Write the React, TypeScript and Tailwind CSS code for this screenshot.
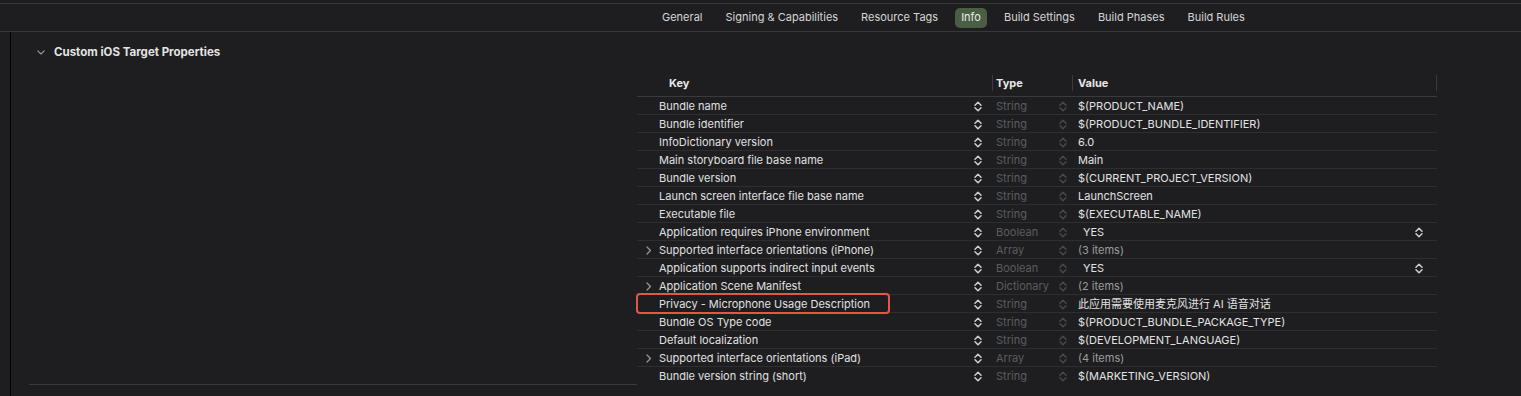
import React from "react";

type Row = {
  key: string;
  type: string;
  value: string;
  expandable?: boolean;
  popup?: boolean;
  dimValue?: boolean;
  highlight?: boolean;
};

const rows: Row[] = [
  { key: "Bundle name", type: "String", value: "$(PRODUCT_NAME)" },
  { key: "Bundle identifier", type: "String", value: "$(PRODUCT_BUNDLE_IDENTIFIER)" },
  { key: "InfoDictionary version", type: "String", value: "6.0" },
  { key: "Main storyboard file base name", type: "String", value: "Main" },
  { key: "Bundle version", type: "String", value: "$(CURRENT_PROJECT_VERSION)" },
  { key: "Launch screen interface file base name", type: "String", value: "LaunchScreen" },
  { key: "Executable file", type: "String", value: "$(EXECUTABLE_NAME)" },
  { key: "Application requires iPhone environment", type: "Boolean", value: "YES", popup: true },
  { key: "Supported interface orientations (iPhone)", type: "Array", value: "(3 items)", expandable: true, dimValue: true },
  { key: "Application supports indirect input events", type: "Boolean", value: "YES", popup: true },
  { key: "Application Scene Manifest", type: "Dictionary", value: "(2 items)", expandable: true, dimValue: true },
  { key: "Privacy - Microphone Usage Description", type: "String", value: "此应用需要使用麦克风进行 AI 语音对话", highlight: true },
  { key: "Bundle OS Type code", type: "String", value: "$(PRODUCT_BUNDLE_PACKAGE_TYPE)" },
  { key: "Default localization", type: "String", value: "$(DEVELOPMENT_LANGUAGE)" },
  { key: "Supported interface orientations (iPad)", type: "Array", value: "(4 items)", expandable: true, dimValue: true },
  { key: "Bundle version string (short)", type: "String", value: "$(MARKETING_VERSION)" },
];

function Stepper({ color }: { color: string }) {
  return (
    <svg width="8" height="11" viewBox="0 0 8 11" fill="none">
      <path d="M1 4.2 L4 1.2 L7 4.2" stroke={color} strokeWidth="1.5" strokeLinecap="round" strokeLinejoin="round" />
      <path d="M1 6.8 L4 9.8 L7 6.8" stroke={color} strokeWidth="1.5" strokeLinecap="round" strokeLinejoin="round" />
    </svg>
  );
}

function Disclosure() {
  return (
    <svg width="6" height="9" viewBox="0 0 6 9" fill="none">
      <path d="M1 1 L4.5 4.5 L1 8" stroke="#9a9a9c" strokeWidth="1.2" strokeLinecap="round" strokeLinejoin="round" />
    </svg>
  );
}

const tabs = ["General", "Signing & Capabilities", "Resource Tags", "Info", "Build Settings", "Build Phases", "Build Rules"];

export default function App() {
  return (
    <div
      className="w-[1521px] h-[396px] overflow-hidden bg-[#1e1e20] text-[#dedede] flex flex-col"
      style={{ fontFamily: 'Inter, "Noto Sans CJK SC", sans-serif' }}
    >
      <div className="h-[4px] shrink-0 border-b border-[#38383a]" />
      <div className="h-[28px] shrink-0 border-b border-[#38383a] flex items-center">
        <div className="ml-[656px] flex items-center gap-[11px] text-[11px]">
          {tabs.map((t) =>
            t === "Info" ? (
              <div key={t} className="h-[20px] px-[6px] rounded-[5px] bg-[#4a5d45] flex items-center text-[#e8ece6]">
                {t}
              </div>
            ) : (
              <div key={t} className="px-[6px] text-[#d6d6d6]">
                {t}
              </div>
            )
          )}
        </div>
      </div>
      <div className="flex-1 flex">
        <div className="w-[10px] shrink-0" />
        <div className="w-px shrink-0 bg-black" />
        <div className="flex-1 flex flex-col">
          <div className="h-[38px] pt-[3px] flex items-center pl-[26px]">
            <svg width="8" height="5" viewBox="0 0 8 5" fill="none">
              <path d="M0.8 0.8 L4 4 L7.2 0.8" stroke="#9a9a9c" strokeWidth="1.1" strokeLinecap="round" strokeLinejoin="round" />
            </svg>
            <span className="ml-[9px] text-[11.5px] font-bold text-[#e4e4e4]">Custom iOS Target Properties</span>
          </div>
          <div className="flex items-start">
            <div className="w-[626px] shrink-0 pl-[18px]">
              <div className="h-[315px] border-b border-[#3a3a3c]" />
            </div>
            <div className="w-[800px] shrink-0 pt-[4px] text-[11px]">
              <div className="h-[23px] border-b border-[#3a3a3c] flex items-start font-bold text-[#e6e6e6]">
                <div className="w-[355px] h-[18px] flex items-center pl-[32px]">Key</div>
                <div className="w-[80px] h-[18px] flex items-center">
                  <div className="w-px h-[16px] bg-[#3a3a3c] self-start mt-[1px]" />
                  <span className="ml-[3px]">Type</span>
                </div>
                <div className="flex-1 h-[18px] flex items-center">
                  <div className="w-px h-[16px] bg-[#3a3a3c] self-start mt-[1px]" />
                  <span className="ml-[5px] flex-1">Value</span>
                  <div className="w-px h-[16px] bg-[#3a3a3c] self-start mt-[1px]" />
                </div>
              </div>
              {rows.map((r, i) => (
                <div
                  key={i}
                  className={`relative h-[18px] pt-[1px] flex items-center ${i < rows.length - 1 ? "border-b border-[#2e2e30]" : ""}`}
                >
                  {r.highlight && (
                    <div className="absolute left-[-1px] top-[-2px] w-[254px] h-[21px] rounded-[4px] border-2 border-[#e2574c]" />
                  )}
                  <div className="w-[355px] flex items-center">
                    <div className="w-[22px] flex justify-center pl-[1px]">{r.expandable && <Disclosure />}</div>
                    <span className="flex-1 text-[#e0e0e0]">{r.key}</span>
                    <div className="w-[8px] mr-[10px] flex items-center">
                      <Stepper color="#d0d0d0" />
                    </div>
                  </div>
                  <div className="w-[80px] flex items-center">
                    <span className="ml-[4px] flex-1 text-[#5c5c5e]">{r.type}</span>
                    <div className="w-[8px] mr-[5px] flex items-center">
                      <Stepper color="#49494b" />
                    </div>
                  </div>
                  <div className="flex-1 flex items-center">
                    {r.popup ? (
                      <>
                        <span className="ml-[11px] flex-1 text-[#e2e2e2]">{r.value}</span>
                        <div className="w-[8px] mr-[14px] flex items-center">
                          <Stepper color="#d0d0d0" />
                        </div>
                      </>
                    ) : (
                      <span className={`ml-[6px] ${r.dimValue ? "text-[#9c9c9e]" : "text-[#e2e2e2]"}`}>{r.value}</span>
                    )}
                  </div>
                </div>
              ))}
            </div>
          </div>
        </div>
      </div>
    </div>
  );
}
